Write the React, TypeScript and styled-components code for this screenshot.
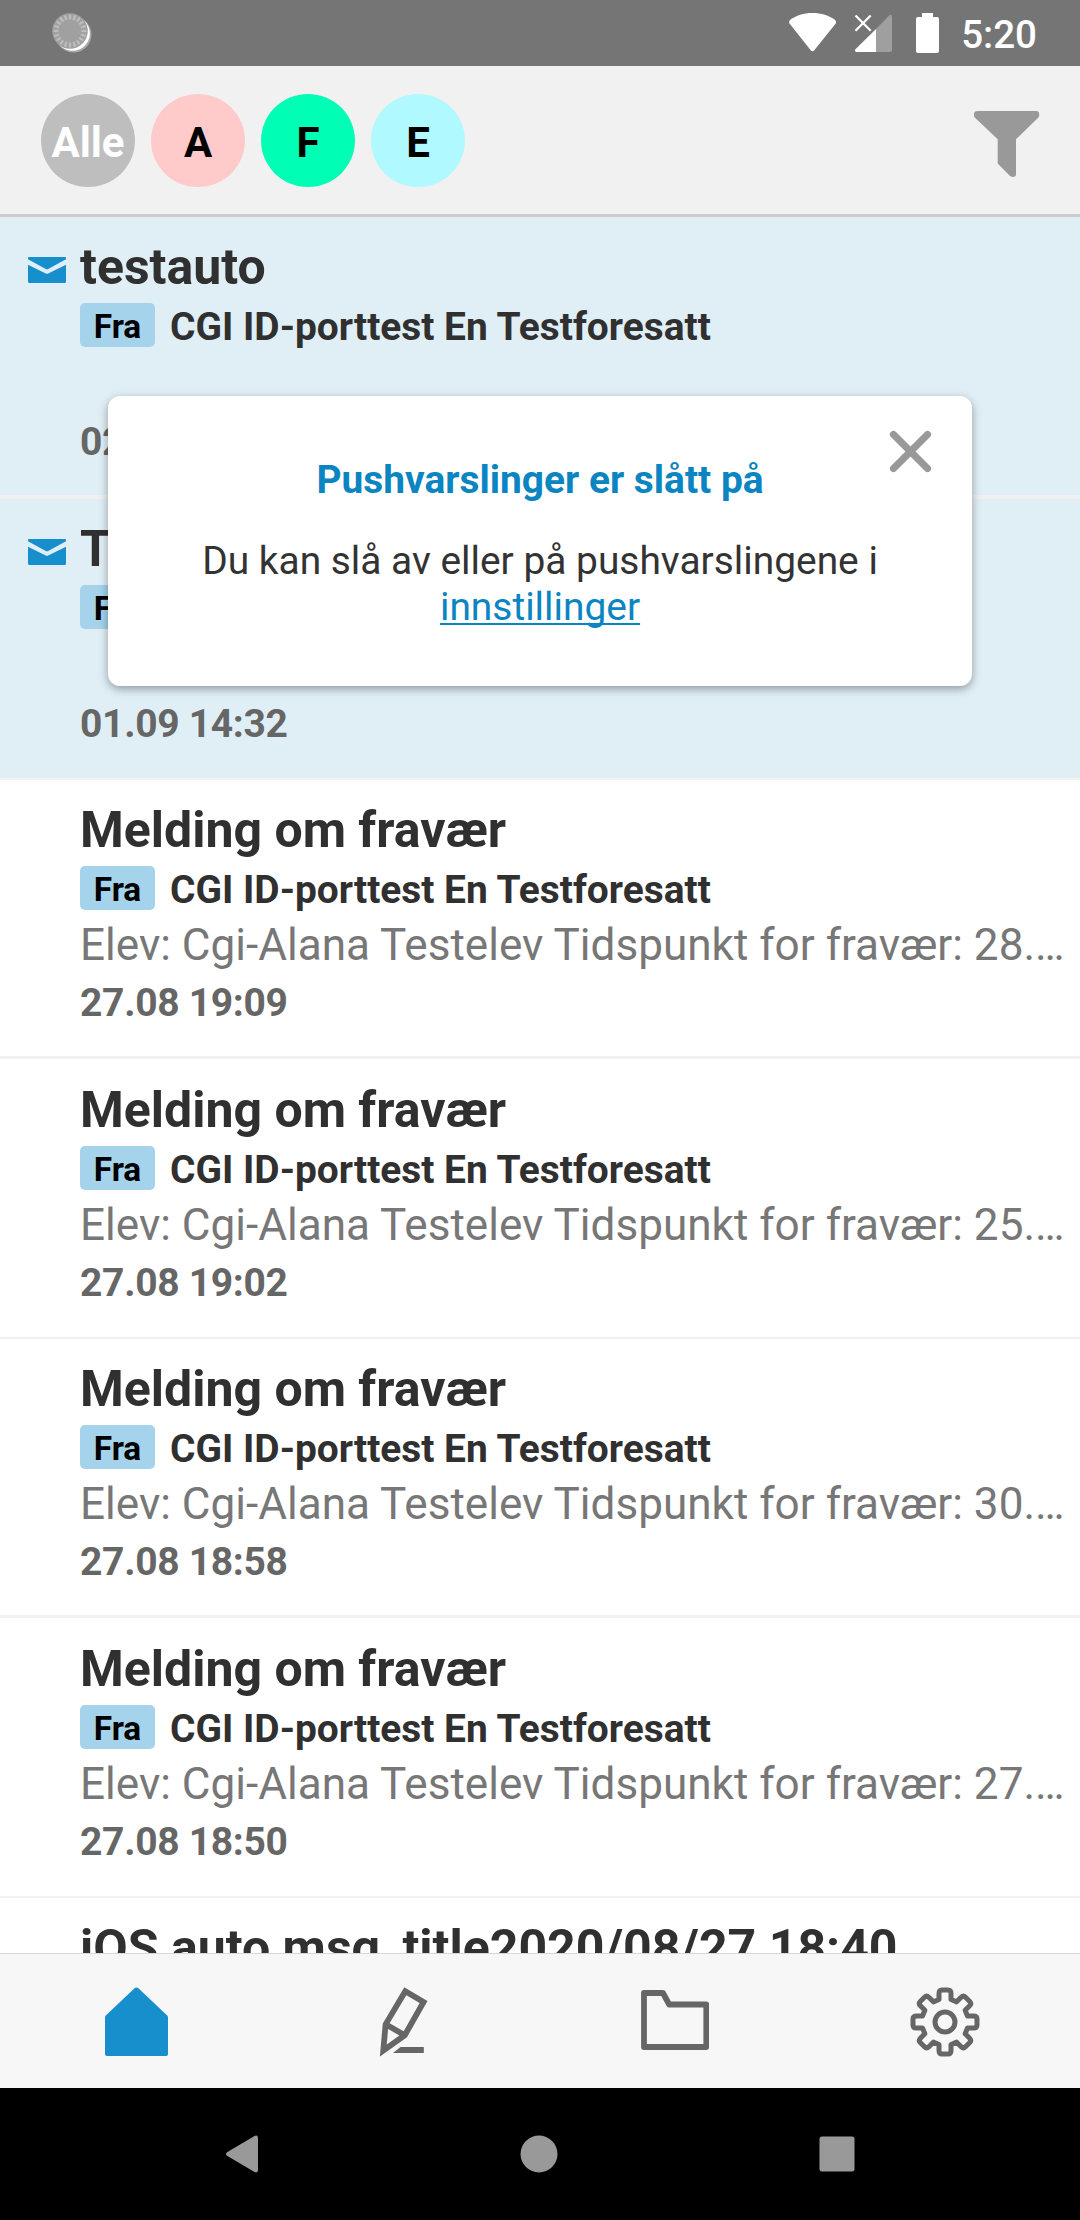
import React from "react";
import styled, { createGlobalStyle } from "styled-components";

const GlobalStyle = createGlobalStyle`
  * { box-sizing: border-box; }
  body { margin: 0; background: #fff; font-family: Roboto, "Liberation Sans", sans-serif; }
  svg { display: block; flex: none; }
`;

const Screen = styled.div`
  position: relative;
  display: flex;
  flex-direction: column;
  width: 1080px;
  height: 2220px;
  overflow: hidden;
  background: #fff;
`;

const StatusBar = styled.div`
  display: flex;
  justify-content: space-between;
  flex: none;
  height: 66px;
  padding: 0 43px 0 50px;
  background: #757575;
`;

const StatusIcons = styled.div`
  display: flex;
`;

const Clock = styled.span`
  margin-left: 21px;
  color: #fff;
  font-size: 38.5px;
  font-weight: 500;
  line-height: 69px;
  white-space: nowrap;
`;

const Header = styled.header`
  display: flex;
  align-items: center;
  justify-content: space-between;
  flex: none;
  height: 151px;
  padding: 0 40px 0 41px;
  background: #f1f1f1;
  border-bottom: 3px solid #ccc;
`;

const Filters = styled.div`
  display: flex;
  gap: 16px;
`;

const FilterChip = styled.button<{ $bg: string; $fg?: string }>`
  width: 94px;
  height: 93px;
  padding: 4px 0 0;
  border: 0;
  border-radius: 50%;
  background: ${(p) => p.$bg};
  color: ${(p) => p.$fg ?? "#000"};
  font: 700 42px/89px Roboto, sans-serif;
  text-align: center;
`;

const FilterButton = styled.button`
  margin-top: 8px;
  padding: 0;
  border: 0;
  background: none;
`;

const List = styled.main`
  flex: none;
  height: 1736px;
  overflow: hidden;
`;

const Row = styled.article<{ $unread?: boolean; $height: number; $line: number; $shift?: number }>`
  display: flex;
  height: ${(p) => p.$height}px;
  padding-top: ${(p) => 20 + (p.$shift ?? 0)}px;
  background: ${(p) => (p.$unread ? "#e0eff6" : "#fff")};
  border-bottom: ${(p) => p.$line}px solid #f1f1f1;
`;

const Gutter = styled.div`
  flex: none;
  width: 80px;
  padding: 20px 0 0 28px;
`;

const RowBody = styled.div`
  flex: 1;
  min-width: 0;
`;

const Title = styled.h2`
  margin: 0;
  color: #303030;
  font-size: 50px;
  font-weight: 700;
  line-height: 60px;
  white-space: nowrap;
`;

const Sender = styled.div`
  display: flex;
  gap: 15px;
  height: 44px;
  margin-top: 6px;
`;

const Tag = styled.span`
  width: 75px;
  height: 44px;
  border-radius: 5px;
  background: #a5d3eb;
  color: #000;
  font-size: 33.4px;
  font-weight: 700;
  line-height: 47px;
  text-align: center;
`;

const SenderName = styled.span`
  color: #303030;
  font-size: 38.9px;
  font-weight: 700;
  line-height: 47px;
  white-space: nowrap;
`;

const Preview = styled.p<{ $empty?: boolean }>`
  height: ${(p) => (p.$empty ? 54 : 52)}px;
  margin: 9px 0 0;
  color: #777;
  font-size: 44.1px;
  line-height: 52px;
  white-space: nowrap;
`;

const DateText = styled.time`
  display: block;
  margin-top: 9px;
  color: #666;
  font-size: 39px;
  font-weight: 700;
  line-height: 47px;
  letter-spacing: -0.3px;
`;

const Popup = styled.section`
  position: absolute;
  left: 108px;
  top: 396px;
  width: 864px;
  height: 290px;
  padding-top: 61px;
  border-radius: 12px;
  background: #fff;
  box-shadow: 0 3px 10px rgba(0, 0, 0, 0.36);
  text-align: center;
`;

const PopupTitle = styled.h3`
  margin: 0;
  color: #0b84c2;
  font-size: 38.9px;
  font-weight: 700;
  line-height: 46px;
`;

const PopupText = styled.p`
  margin: 35px 0 0;
  color: #333;
  font-size: 38.9px;
  line-height: 46px;
`;

const PopupLink = styled.a`
  color: #0b84c2;
  text-decoration: underline;
  text-decoration-thickness: 2px;
  text-decoration-skip-ink: none;
  text-underline-offset: 3px;
`;

const CloseButton = styled.button`
  position: absolute;
  top: 34px;
  right: 40px;
  padding: 0;
  border: 0;
  background: none;
`;

const TabBar = styled.nav`
  display: grid;
  grid-template-columns: repeat(4, 270px);
  justify-items: center;
  align-items: center;
  flex: none;
  height: 135px;
  padding-top: 1px;
  background: #f7f7f7;
  border-top: 1px solid #d8d8d8;
`;

const Tab = styled.a<{ $nudge?: number; $lift?: number }>`
  margin: 0 0 ${(p) => p.$lift ?? 0}px ${(p) => p.$nudge ?? 0}px;
`;

const SystemBar = styled.div`
  display: flex;
  align-items: center;
  justify-content: space-between;
  flex: none;
  height: 132px;
  padding: 0 225px;
  background: #000;
`;

const TICKS = Array.from({ length: 20 }, (_, i) => i * 18);

const Spinner = () => (
  <svg width="44" height="66" viewBox="50 0 44 66">
    <circle cx="73.500" cy="34.600" r="18" fill="#a8a8a8" />
    <circle cx="72.600" cy="33.500" r="17.300" fill="#fff" />
    <circle cx="70" cy="31" r="17.800" fill="#a0a0a0" />
    {TICKS.map((a) => (
      <path key={a} d="M70 14.500v5" stroke="#bdbdbd" strokeWidth="2.200" transform={`rotate(${a} 70 31)`} />
    ))}
  </svg>
);

const StatusGlyphs = () => (
  <svg width="152" height="66" viewBox="788 0 152 66">
    <path
      fill="#fff"
      d="M812.5 13c9 0 16.500 2.500 22.300 6.700c1.400 1.100 1.700 2.600.7 4L814.300 50.200c-1.100 1.300-2.500 1.300-3.600 0L789.700 23.700c-1-1.400-.8-2.900.6-4C796 15.500 803.500 13 812.500 13z"
    />
    <path fill="#fff" d="M876 29v23H856.500q-2 0-1.300-2.400z" />
    <path fill="#9f9f9f" d="M876 29l13.200-13.600q2.800-1.500 2.800 1V50q0 2-2 2h-14z" />
    <path stroke="#fff" strokeWidth="2.200" d="M855.500 15.500l15.200 15.200M870.700 15.500l-15.200 15.200" />
    <path fill="#fff" d="M922 13h11v4h4q2 0 2 2v32q0 2-2 2h-19q-2 0-2-2V19q0-2 2-2h4z" />
  </svg>
);

const FunnelIcon = () => (
  <svg width="66" height="68" viewBox="974 110 66 68">
    <path
      fill="#999"
      d="M977.500 111h58.500q3.200 0 3.200 3v1.500q0 1.200-1 2.300L1016 139.300V174q0 3-3 3q-2 0-3.500-1.400L997.700 163.500V139.300L975 117.800q-1-1.100-1-2.300V114q0-3 3.500-3z"
    />
  </svg>
);

const EnvelopeIcon = () => (
  <svg width="38" height="26" viewBox="0 0 38 26">
    <path
      fill="#178fcd"
      d="M1 0h36q1 0 1 1v1.300L20.200 11.900q-1.200.6-2.400 0L0 2.300V1q0-1 1-1zM0 7.700l17.800 8.700q1.200.6 2.400 0L38 7.700V24.500q0 1.500-1.500 1.500h-35Q0 26 0 24.500z"
    />
  </svg>
);

const CloseIcon = () => (
  <svg width="43" height="43" viewBox="0 0 43 43">
    <path d="M4.500 4.500l34 34M38.500 4.500l-34 34" stroke="#999" strokeWidth="7.200" strokeLinecap="round" />
  </svg>
);

const HomeIcon = () => (
  <svg width="64" height="70" viewBox="105 1987 64 70">
    <path
      fill="#178fcd"
      d="M134.300 1988.500q2.200-1.800 4.400 0L167.200 2015.500q.8.900.8 2V2054q0 2-2 2H107q-2 0-2-2V2017.500q0-1.100.8-2z"
    />
  </svg>
);

const PencilIcon = () => (
  <svg width="48" height="70" viewBox="380 1987 48 70">
    <path
      d="M405.300 1991.200L423.600 2002L404.800 2035.200L383.300 2050.500L385.600 2024.300zM385.600 2024.300L404.800 2035.200"
      fill="none"
      stroke="#666"
      strokeWidth="5.800"
    />
    <path fill="#666" d="M400.500 2047h23.300v6H393z" />
  </svg>
);

const FolderIcon = () => (
  <svg width="68" height="60" viewBox="641 1990 68 60">
    <path
      d="M644 1993H663L669.200 2004.500H706.300V2047H644z"
      fill="none"
      stroke="#666"
      strokeWidth="5.800"
      strokeLinejoin="round"
    />
  </svg>
);

const gearPath = (() => {
  const tooth: [string, number[]][] = [
    ["L", [-6, -22.5]],
    ["L", [-6, -28.5]],
    ["Q", [-6, -32, -3, -32]],
    ["L", [3, -32]],
    ["Q", [6, -32, 6, -28.5]],
    ["L", [6, -22.5]],
  ];
  let d = "";
  for (let i = 0; i < 8; i++) {
    const a = (i * Math.PI) / 4;
    for (const [cmd, pts] of tooth) {
      const out: string[] = [];
      for (let k = 0; k < pts.length; k += 2) {
        const x = pts[k] * Math.cos(a) - pts[k + 1] * Math.sin(a);
        const y = pts[k] * Math.sin(a) + pts[k + 1] * Math.cos(a);
        out.push(`${x.toFixed(2)} ${y.toFixed(2)}`);
      }
      d += (d ? cmd : "M") + out.join(" ");
    }
  }
  return d + "z";
})();

const GearIcon = () => (
  <svg width="70" height="70" viewBox="-35 -35 70 70">
    <g fill="none" stroke="#666" strokeWidth="5" strokeLinejoin="round">
      <path d={gearPath} />
      <circle r="10" />
    </g>
  </svg>
);

const BackIcon = () => (
  <svg width="34" height="38" viewBox="0 0 34 38">
    <path fill="#999" d="M2 17.200L29.500.9Q33 -.3 33 3V35q0 3.300-3.500 2.100L2 20.800q-2-1.800 0-3.600z" />
  </svg>
);

const CircleIcon = () => (
  <svg width="38" height="38" viewBox="0 0 38 38">
    <circle cx="19" cy="19" r="18.500" fill="#999" />
  </svg>
);

const SquareIcon = () => (
  <svg width="36" height="36" viewBox="0 0 36 36">
    <rect x=".5" y=".5" width="35" height="35" rx="2.500" fill="#999" />
  </svg>
);

type Message = {
  title: string;
  preview?: string;
  date: string;
  unread?: boolean;
  height: number;
  line: number;
  shift?: number;
};

const absence = (day: string) => `Elev: Cgi-Alana Testelev Tidspunkt for fravær: ${day}.…`;

const MESSAGES: Message[] = [
  { title: "testauto", date: "02.09 10:15", unread: true, height: 282, line: 4 },
  { title: "Test", date: "01.09 14:32", unread: true, height: 281, line: 2 },
  { title: "Melding om fravær", preview: absence("28"), date: "27.08 19:09", height: 279, line: 3 },
  { title: "Melding om fravær", preview: absence("25"), date: "27.08 19:02", height: 280, line: 2, shift: 1 },
  { title: "Melding om fravær", preview: absence("30"), date: "27.08 18:58", height: 279, line: 3 },
  { title: "Melding om fravær", preview: absence("27"), date: "27.08 18:50", height: 280, line: 2, shift: 1 },
  { title: "iOS auto msg_title2020/08/27 18:40", date: "27.08 18:40", height: 280, line: 2 },
];

const MessageRow = ({ message: m }: { message: Message }) => (
  <Row $unread={m.unread} $height={m.height} $line={m.line} $shift={m.shift}>
    <Gutter>{m.unread && <EnvelopeIcon />}</Gutter>
    <RowBody>
      <Title>{m.title}</Title>
      <Sender>
        <Tag>Fra</Tag>
        <SenderName>CGI ID-porttest En Testforesatt</SenderName>
      </Sender>
      <Preview $empty={!m.preview}>{m.preview}</Preview>
      <DateText>{m.date}</DateText>
    </RowBody>
  </Row>
);

export default function App() {
  return (
    <>
      <GlobalStyle />
      <Screen>
        <StatusBar>
          <Spinner />
          <StatusIcons>
            <StatusGlyphs />
            <Clock>5:20</Clock>
          </StatusIcons>
        </StatusBar>
        <Header>
          <Filters>
            <FilterChip $bg="#bebebe" $fg="#fff">Alle</FilterChip>
            <FilterChip $bg="#ffcac9">A</FilterChip>
            <FilterChip $bg="#00ffb5">F</FilterChip>
            <FilterChip $bg="#b0f9ff">E</FilterChip>
          </Filters>
          <FilterButton aria-label="Filter">
            <FunnelIcon />
          </FilterButton>
        </Header>
        <List>
          {MESSAGES.map((m, i) => (
            <MessageRow key={i} message={m} />
          ))}
        </List>
        <TabBar>
          <Tab $nudge={4}>
            <HomeIcon />
          </Tab>
          <Tab $nudge={-2}>
            <PencilIcon />
          </Tab>
          <Tab $lift={4}>
            <FolderIcon />
          </Tab>
          <Tab>
            <GearIcon />
          </Tab>
        </TabBar>
        <SystemBar>
          <BackIcon />
          <CircleIcon />
          <SquareIcon />
        </SystemBar>
        <Popup>
          <PopupTitle>Pushvarslinger er slått på</PopupTitle>
          <PopupText>
            Du kan slå av eller på pushvarslingene i
            <br />
            <PopupLink>innstillinger</PopupLink>
          </PopupText>
          <CloseButton aria-label="Lukk">
            <CloseIcon />
          </CloseButton>
        </Popup>
      </Screen>
    </>
  );
}
